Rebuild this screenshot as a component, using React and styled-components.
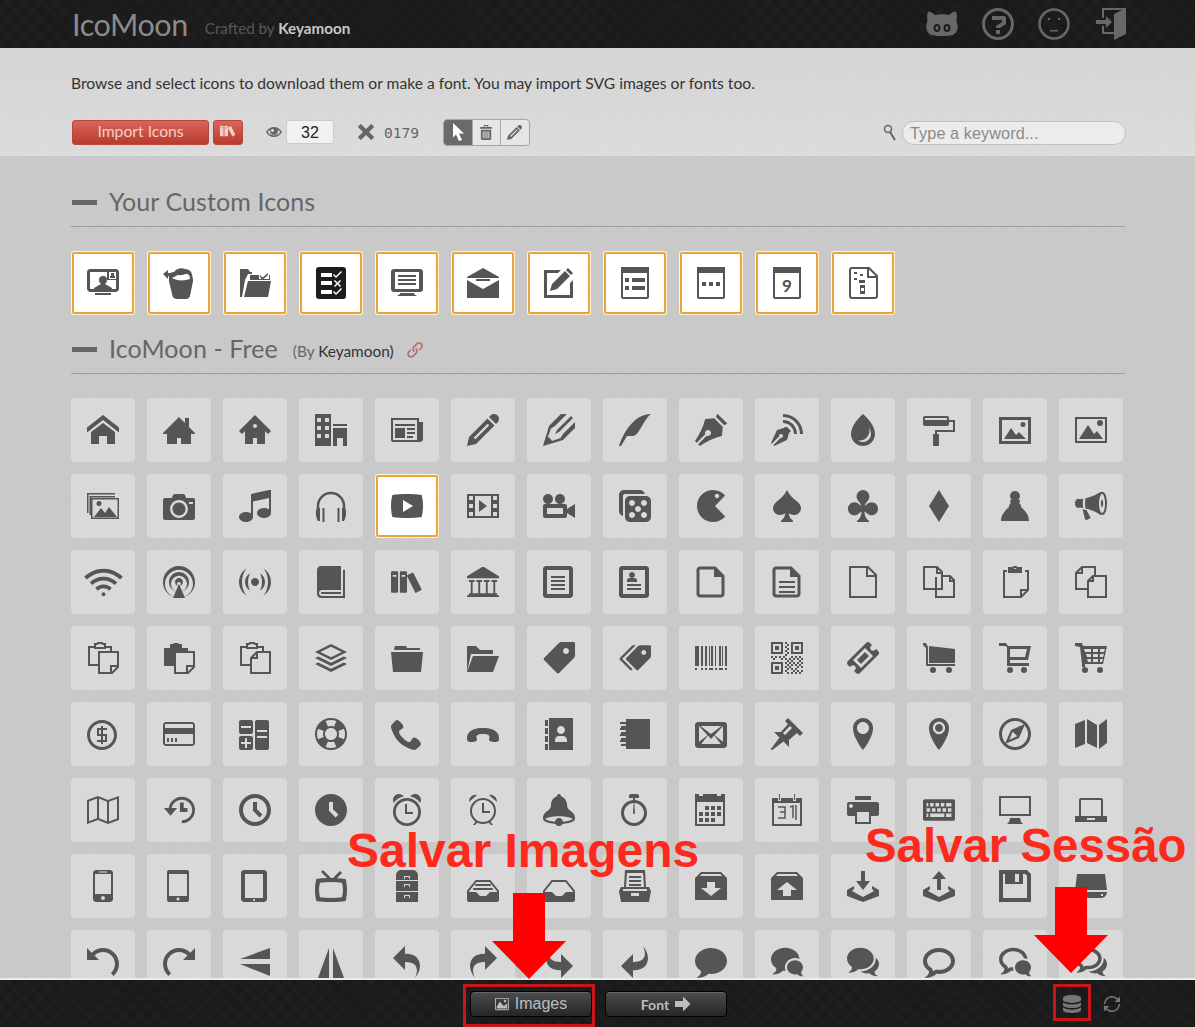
import React from 'react'
import styled, { createGlobalStyle } from 'styled-components'
import {
  ImHome, ImHome2, ImHome3, ImOffice, ImNewspaper, ImPencil, ImPencil2, ImQuill, ImPen, ImBlog, ImDroplet, ImPaintFormat,
  ImCamera, ImMusic, ImPlay, ImFilm, ImVideoCamera, ImDice, ImPacman, ImSpades, ImClubs, ImDiamonds, ImBullhorn,
  ImConnection, ImPodcast, ImFeed, ImBook, ImBooks, ImLibrary, ImFileText, ImProfile,
  ImStack, ImFolderOpen, ImPriceTag, ImPriceTags, ImBarcode, ImQrcode, ImTicket,
  ImCoinDollar, ImCreditCard, ImCalculator, ImLifebuoy, ImPhone, ImPhoneHangUp, ImAddressBook, ImEnvelop, ImPushpin, ImLocation, ImLocation2, ImCompass2, ImMap,
  ImMap2, ImHistory, ImClock, ImClock2, ImAlarm, ImBell, ImStopwatch, ImCalendar, ImPrinter, ImKeyboard, ImDisplay, ImLaptop,
  ImMobile, ImMobile2, ImTablet, ImTv, ImDrawer, ImDrawer2, ImBoxAdd, ImBoxRemove, ImFloppyDisk, ImDrive,
  ImUndo, ImRedo, ImUndo2, ImRedo2, ImForward, ImReply, ImBubble, ImBubbles, ImBubbles2, ImBubble2, ImBubbles3, ImBubbles4,
  ImQuestion, ImEnter, ImEye, ImCross, ImBin, ImLink, ImArrowRight, ImDatabase, ImLoop2, ImImage,
} from 'react-icons/im'

const GlobalStyle = createGlobalStyle`
  html, body { margin: 0; height: 100%; overflow: hidden; }
  body { font-family: "Lato", "Open Sans", sans-serif; background: #c9c9c9; }
`

const weave = `repeating-linear-gradient(45deg, rgba(255,255,255,.03) 0 1px, transparent 1px 2px), repeating-linear-gradient(-45deg, rgba(0,0,0,.2) 0 1px, transparent 1px 2px)`
const grain = `repeating-linear-gradient(45deg, rgba(255,255,255,.035) 0 1px, transparent 1px 3px), repeating-linear-gradient(-45deg, rgba(0,0,0,.012) 0 1px, transparent 1px 3px)`

const Page = styled.div`
  position: relative;
  height: 100vh;
  display: flex;
  flex-direction: column;
  overflow: hidden;
`
const Header = styled.header`
  flex: none;
  height: 48px;
  box-sizing: border-box;
  padding: 0 69px 0 72px;
  display: flex;
  align-items: center;
  background-color: #1b1b1b;
  background-image: ${weave};
`
const Logo = styled.div`
  font-size: 30.5px;
  color: #8b8b8b;
  line-height: 48px;
  letter-spacing: -.4px;
`
const Crafted = styled.div`
  margin: 8px 0 0 17px;
  font-size: 15.2px;
  color: #585858;
  b { color: #c8c8c8; font-weight: 700; }
`
const HeaderIcons = styled.nav`
  margin-left: auto;
  display: flex;
  align-items: center;
  gap: 24px;
  color: #686868;
`
const Toolbar = styled.section`
  flex: none;
  height: 108px;
  box-sizing: border-box;
  padding: 25px 69px 0 71px;
  background-color: #d9d9d9;
  background-image: ${grain}, linear-gradient(#d5d5d5, #dcdcdc);
`
const Description = styled.p`
  margin: 0;
  font-size: 15.64px;
  line-height: 20px;
  color: #333;
`
const Actions = styled.div`
  margin: 26px 0 0 1px;
  display: flex;
  align-items: center;
  height: 26px;
`
const RedButton = styled.button`
  width: ${p => p.$w}px;
  height: 25px;
  margin-right: ${p => p.$gap}px;
  padding: 0 0 2px;
  display: flex;
  align-items: center;
  justify-content: center;
  border: 1px solid #b9483c;
  border-radius: 3px;
  background: linear-gradient(#d9665a, #b93a2e);
  color: #f4cfc8;
  font: 15.7px "Lato", sans-serif;
`
const ZoomGroup = styled.div`
  margin-left: 23px;
  display: flex;
  align-items: center;
  gap: 4px;
  color: #666;
`
const SizeInput = styled.div`
  width: 48px;
  height: 24px;
  box-sizing: border-box;
  border: 1px solid #ccc;
  border-radius: 2px;
  background: #f1f1f1;
  color: #222;
  font: 16px/24px "Liberation Sans", sans-serif;
  text-align: center;
`
const Counter = styled.div`
  margin-left: 24px;
  display: flex;
  align-items: center;
  gap: 10px;
  color: #666;
  font: 14.6px "DejaVu Sans Mono", monospace;
`
const ToolGroup = styled.div`
  margin-left: 24px;
  display: flex;
  height: 25px;
  border: 1px solid #a5a5a5;
  border-radius: 4px;
  overflow: hidden;
  background: #e6e6e6;
`
const ToolCell = styled.div`
  width: 27.5px;
  display: flex;
  align-items: center;
  justify-content: center;
  color: ${p => (p.$active ? '#fff' : '#666')};
  background: ${p => (p.$active ? '#6a6a6a' : 'transparent')};
  & + & { border-left: 1px solid #aaa; }
`
const SearchBox = styled.div`
  margin: 1px 0 0 auto;
  display: flex;
  align-items: center;
  gap: 6px;
  color: #666;
`
const SearchField = styled.div`
  width: 224px;
  height: 24px;
  box-sizing: border-box;
  padding-left: 7px;
  border: 1px solid #c2c2c2;
  border-radius: 12px;
  background: #ececec;
  color: #8a8a8a;
  font: 16.2px/23px "Liberation Sans", sans-serif;
  letter-spacing: .1px;
`
const Content = styled.main`
  flex: 1;
  min-height: 0;
  overflow: hidden;
  padding: 0 70px 0 71px;
  background-color: #c9c9c9;
  background-image: ${grain};
`
const SectionHead = styled.div`
  margin-top: ${p => p.$top}px;
  display: flex;
  align-items: center;
  height: 26px;
  padding-bottom: 11px;
  border-bottom: 1px solid #9d9d9d;
`
const Dash = styled.span`
  width: 25px;
  height: 5px;
  margin: 0 12px 0 1px;
  background: #666;
`
const SectionTitle = styled.h2`
  margin: -2px 0 0;
  font-size: 25px;
  font-weight: 400;
  color: #666;
  letter-spacing: .1px;
`
const SectionBy = styled.span`
  margin: 4px 0 0 15px;
  font-size: 15.4px;
  color: #666;
  b { font-weight: 400; color: #333; }
`
const LinkMark = styled.span`
  margin: 1px 0 0 13px;
  display: flex;
  color: #b96a68;
`
const IconGrid = styled.div`
  margin-top: ${p => p.$top}px;
  display: grid;
  grid-template-columns: repeat(14, 64px);
  grid-auto-rows: 64px;
  gap: 12px;
`
const Tile = styled.div`
  display: flex;
  align-items: center;
  justify-content: center;
  box-sizing: border-box;
  color: #555;
  border-radius: ${p => (p.$selected ? 2 : 4)}px;
  background: ${p => (p.$selected ? '#fff' : '#d9d9d9')};
  ${p => p.$selected && `
    margin: 1px;
    border: 2px solid #e9a53c;
    box-shadow: 0 0 0 1px #fff3d8;
  `}
`
const Footer = styled.footer`
  flex: none;
  height: 49px;
  box-sizing: border-box;
  border-top: 2px solid #ececec;
  padding: 11px 75px 0 77px;
  display: grid;
  grid-template-columns: 1fr auto 1fr;
  background-color: #1b1b1b;
  background-image: ${weave};
`
const FooterButtons = styled.div`
  grid-column: 2;
  display: flex;
  gap: 13px;
`
const DarkButton = styled.button`
  width: 122px;
  height: 26px;
  padding: 0;
  display: flex;
  align-items: center;
  justify-content: center;
  gap: 6px;
  border: 1px solid #000;
  border-radius: 4px;
  background: linear-gradient(#4c4c4c, #262626);
  box-shadow: inset 0 1px 0 #666;
  color: #bdbdbd;
  font: ${p => p.$font};
`
const FooterTools = styled.div`
  justify-self: end;
  display: flex;
  align-items: center;
  height: 26px;
  gap: 23px;
  color: #777;
`
const RedNote = styled.div`
  position: absolute;
  left: ${p => p.$left}px;
  top: ${p => p.$top}px;
  font: bold ${p => p.$size}px/1 "Liberation Sans", sans-serif;
  color: #fb2a1c;
  white-space: nowrap;
`
const RedArrow = styled.svg`
  position: absolute;
  left: ${p => p.$left}px;
  top: ${p => p.$top}px;
  fill: #f00;
`
const RedFrame = styled.div`
  position: absolute;
  left: ${p => p.$left}px;
  top: 984px;
  width: ${p => p.$w}px;
  height: ${p => p.$h}px;
  box-sizing: border-box;
  border: 3px solid #c9161a;
`

const Svg = ({ children, size = 32 }) => (
  <svg width={size} height={size} viewBox="0 0 32 32" fill="currentColor">{children}</svg>
)
const Line = ({ children, w = 2 }) => (
  <g fill="none" stroke="currentColor" strokeWidth={w}>{children}</g>
)

const ImageThick = () => (
  <Svg>
    <path fillRule="evenodd" d="M0 3h32v27H0zM3 6v21h26V6z" />
    <path d="M5 25l7-11 5 7 3-3 7 7zM24 8a2.500 2.500 0 1 1 0 5 2.500 2.500 0 0 1 0-5z" />
  </Svg>
)
const ImageThin = () => (
  <Svg>
    <path fillRule="evenodd" d="M0 3h32v26H0zM2 5v22h28V5z" />
    <path d="M4 25l9-14 6 9 3-3 6 8zM25 6a3 3 0 1 1 0 6 3 3 0 0 1 0-6z" />
  </Svg>
)
const ImageStack = () => (
  <Svg>
    <path d="M0 3h28v1.500H1.500V23H0zM2.500 6H28v1.500H4V25H2.500z" />
    <path fillRule="evenodd" d="M4 8h28v21H4zM5.500 9.500v18h25v-18z" />
    <path d="M7 27l7-9 4 5 4-6 8 10zM12 11a2.500 2.500 0 1 1 0 5 2.500 2.500 0 0 1 0-5z" />
  </Svg>
)
const Headset = () => (
  <Svg>
    <Line w={2.500}><path d="M3 22v-6a13 13 0 0 1 26 0v6" /></Line>
    <path d="M2 18h3v13H3c-2-3-3-9-1-13zM30 18h-3v13h2c2-3 3-9 1-13zM7.500 18h2v14h-2zM22.500 18h2v14h-2z" />
  </Svg>
)
const Wifi = () => <ImConnection size={39} />
const FolderFlared = () => (
  <Svg>
    <path d="M4 4h11l1 2h13v2H3zM0 10h32l-2 20H2z" />
  </Svg>
)
const FileThick = ({ lines }) => (
  <Svg>
    <Line w={3}><path d="M5 2h15l8 8v18c0 1-1 2-2 2H5c-1 0-2-1-2-2V4c0-1 1-2 2-2z" /></Line>
    <path d="M19 1l10 10H19z" />
    {lines && <path d="M8 15h16v2H8zM8 20h16v2H8zM8 25h16v2H8z" />}
  </Svg>
)
const FileThin = () => (
  <Svg><Line><path d="M3 1h18l8 8v22H3zM20 1v9h9" /></Line></Svg>
)
const FilesPair = () => (
  <Svg>
    <Line>
      <path d="M1 1h13l5 5v17H1zM14 1v6h5" />
      <path d="M13 11v20h18V14l-4-4h-7M27 10v5h4" />
    </Line>
  </Svg>
)
const ClipPaper = () => (
  <Svg>
    <Line><path d="M8 5H5v26h17l7-7V5h-3M22 31v-7h7M10 6V2h4l1-1h2l1 1h4v4z" /></Line>
    <path d="M10 3h12v3H10z" />
  </Svg>
)
const FilesOverlap = () => (
  <Svg>
    <Line>
      <path d="M14 23H1V7l6-6h13v9M7 1v6H1" />
      <path d="M13 31V15l5-5h13v21zM18 10v5h-5" />
    </Line>
  </Svg>
)
const PasteFront = ({ solid, fold }) => (
  <Svg>
    {solid
      ? <path d="M1 6h6V2h3l1-1h4l1 1h3v4h6v5H13v13H1z" />
      : <Line><path d="M7 5H2v18h10M19 5h5v5M8 6V2h2l1-1h4l1 1h2v4z" /></Line>}
    {fold
      ? <Line><path d="M12 31V16l6-6h13v21zM18 10v6h-6" /></Line>
      : <Line><path d="M12 10h19v15l-6 6H12zM31 24h-7v7" /></Line>}
  </Svg>
)
const CartFilled = () => (
  <Svg>
    <path d="M0 1h3l2 4v17h27v2H5c-1 0-2 0-2-1V6L0 3z" />
    <path d="M6 4l26 3v14H6zM10 25a3 3 0 1 1 0 6 3 3 0 0 1 0-6zM26 25a3 3 0 1 1 0 6 3 3 0 0 1 0-6z" />
  </Svg>
)
const CartOutline = () => (
  <Svg>
    <path d="M0 1h7l2 3h23l-3 14H11v3h19v3H8V5L6 4H0zM11 7v8h15l2-8zM11 25a3 3 0 1 1 0 6 3 3 0 0 1 0-6zM25 25a3 3 0 1 1 0 6 3 3 0 0 1 0-6z" fillRule="evenodd" />
  </Svg>
)
const CartBasket = () => (
  <Svg>
    <path fillRule="evenodd" d="M0 1h7l1 3h24l-4 18H10v3h-3V22L5 5 0 4zM9 7l1 3h6V7zm9 0v3h5V7zm7 0v3h4l1-3zM11 12l1 3h4v-3zm7 0v3h5v-3zm7 0v3h3l1-3zM12 17l1 3h3v-3zm6 0v3h5v-3zm7 0v3h2l1-3z" />
    <path d="M10 25a3 3 0 1 1 0 6 3 3 0 0 1 0-6zM25 25a3 3 0 1 1 0 6 3 3 0 0 1 0-6z" />
  </Svg>
)
const Notebook = () => (
  <Svg>
    <path d="M7 1h24v30H7z" />
    <Line><path d="M1 5h5a2 2 0 0 1 0 4H2M1 11h5a2 2 0 0 1 0 4H2M1 17h5a2 2 0 0 1 0 4H2M1 23h5a2 2 0 0 1 0 4H2" /></Line>
  </Svg>
)
const AlarmOutline = () => (
  <Svg>
    <Line>
      <circle cx="16" cy="17" r="12" />
      <path d="M16 9v9h7" />
    </Line>
    <path d="M2 8c0-5 4-8 8-7zM30 8c0-5-4-8-8-7z" />
    <path d="M9 27l-3 4h2l3-3zM23 27l3 4h-2l-3-3z" />
  </Svg>
)
const Calendar31 = () => (
  <Svg>
    <path fillRule="evenodd" d="M1 4h6v3h3V4h12v3h3V4h6v28H1zM3 9v21h26V9z" />
    <path d="M8 0h1v6H8zM23 0h1v6h-1z" />
    <Line w="1.500">
      <path d="M7 13h7v5H9h5v6H7M19 13l3-1v12M25 11v15" />
    </Line>
  </Svg>
)
const Cabinet = () => (
  <Svg>
    <path fillRule="evenodd" d="M5 5c0-3 3-5 5-5h12c2 0 5 2 5 5v5H5zm8 1v3h1V7h4v2h1V6zM5 11h22v10H5zm8 3v3h1v-2h4v2h1v-3zM5 22h22v10H5zm8 3v3h1v-2h4v2h1v-3z" />
  </Svg>
)
const DrawerFile = () => (
  <Svg>
    <path fillRule="evenodd" d="M6 0h20l1 17h3l2 4-2 11H2L0 21l2-4h3zm2 3l-1 14h18L24 3zM4 19v2h24v-2zm8 4v3h8v-3z" />
    <path d="M10 6h12v2H10zM10 10h12v2H10zM10 14h12v2H10z" />
  </Svg>
)
const TrayArrow = ({ up }) => (
  <Svg>
    <path d="M0 20l7-4v3l-2 2 11 6 11-6-2-2v-3l7 4v6L16 32 0 26z" />
    <path d={up ? 'M16 1l7 8h-5v11h-4V9H9z' : 'M14 1h4v10h5l-7 9-7-9h5z'} />
  </Svg>
)
const FlipH = () => (
  <Svg><path d="M1 13L31 2v11zM1 18h30v12z" /></Svg>
)
const FlipV = () => (
  <Svg><path d="M14 2v30H3zM18 2l11 30H18z" /></Svg>
)
const Pawn = () => (
  <Svg>
    <path d="M16 1a5 5 0 0 1 3.500 8.500c1 .6 1.500 1 1.500 2s-.5 1.200-1 1.600c1.500 1 2 2.500 2 4C25 20 30 24 30 31H2c0-7 5-11 8-13.900 0-1.500.5-3 2-4-.5-.4-1-1-1-1.600s.5-1.400 1.500-2A5 5 0 0 1 16 1z" />
  </Svg>
)

const Cat = () => (
  <svg width="32" height="32" viewBox="0 0 32 32" fill="currentColor">
    <path fillRule="evenodd" d="M2 4c1-1 2-.5 7 3 4-1 10-1 14 0 5-3.500 6-4 7-3 1 1 1 6 .5 9 2 5 1.500 9-1 12-3 3-8 3-13.500 3s-10.500 0-13.500-3c-2.500-3-3-7-1-12C1 10 1 5 2 4zM11 16c-2 0-3.500 1.500-3.500 4S9 24 11 24s3.500-1.500 3.500-4-1.500-4-3.500-4zm10 0c-2 0-3.500 1.500-3.500 4s1.500 4 3.500 4 3.500-1.500 3.500-4-1.500-4-3.500-4z" />
    <ellipse cx="11" cy="20" rx="1.500" ry="2" />
    <ellipse cx="21" cy="20" rx="1.500" ry="2" />
  </svg>
)
const NeutralFace = () => (
  <Svg>
    <Line w={2.500}><circle cx="16" cy="16" r="14.500" /></Line>
    <path d="M10 10h2v2h-2zM20 10h2v2h-2zM12 22h8v1.500h-8z" />
  </Svg>
)
const Cursor = () => (
  <svg width="16" height="18" viewBox="0 0 16 18" fill="currentColor">
    <path d="M3 0l11 10.500H9l3 6.500-3 1-3-6.500-3 3z" />
  </svg>
)
const Lens = () => (
  <svg width="13" height="17" viewBox="0 0 13 17" fill="none" stroke="currentColor">
    <circle cx="5" cy="5" r="3.500" strokeWidth="1.500" />
    <path d="M7 8l5 8" strokeWidth="2" />
  </svg>
)

const CustomMonitor = () => (
  <Svg>
    <path fillRule="evenodd" d="M3 2h26c1 0 3 1 3 3v17c0 1-2 3-3 3H3c-1 0-3-2-3-3V5c0-2 2-3 3-3zm0 3v17h26V5z" />
    <path d="M16 9c3 0 4 2 4 4 0 2-1 3-2 4l7 4v4H7v-4l7-4c-1-1-2-2-2-4 0-2 1-4 4-4zM8 26h16v2H8zM20 4h10v9H20z" />
    <path fill="#fff" d="M22 5h7v7h-7z" />
    <path d="M24 6h3v3h-3zM23 9h5v2h-5z" />
  </Svg>
)
const CustomBucket = () => (
  <Svg>
    <path d="M6 14h24l-3 15c-.5 2-2 3-4 3h-9c-2 0-4-1-4.500-3z" />
    <path d="M6 9c0-3 3-4 5-4 2-3 7-5 11-3 3 0 7 2 7 6 1 3 1 5 1 7-7 2-17 2-24 0z" />
    <path fill="#fff" d="M9 11c3-1 4-3 7-3 2 1 5-1 7-1 3 0 4 2 4 5-6 2-13 2-18-1z" />
    <path d="M0 7l5-4v3h4v3H5v3z" />
  </Svg>
)
const CustomFolder = () => (
  <Svg>
    <path d="M1 2h8l2 3h2v2H9L6 13 3 30H1zM5 30l4-16h23l-3 16z" />
    <path d="M11 8h20v5H11z" />
    <path fill="#fff" d="M20 8h10v4H20z" />
    <path d="M21 8l2.500 2.500L29 6v2l-5.500 5L21 10z" />
  </Svg>
)
const CustomChecklist = () => (
  <Svg>
    <g fill="#1c1c1c"><path d="M4 0h24c2 0 3 1 3 3v26c0 2-1 3-3 3H4c-2 0-3-1-3-3V3c0-2 1-3 3-3z" /></g>
    <g fill="#fff">
      <path d="M6 6h11v4H6zM6 14h11v4H6zM6 23h11v4H6z" />
      <path d="M19 7l2 2 5-5 1 1-6 6-3-3zM19 14l1-1 2.500 2.500L25 13l1 1-2.500 2.500L26 19l-1 1-2.500-2.500L20 20l-1-1 2.500-2.500zM19 24l2 2 5-5 1 1-6 6-3-3z" />
    </g>
  </Svg>
)
const CustomScreen = () => (
  <Svg>
    <path fillRule="evenodd" d="M3 2h26c2 0 3 1 3 3v16c0 3-1 4-3 4H3c-2 0-3-1-3-4V5c0-2 1-3 3-3zm1 3v17h24V5z" />
    <path d="M7 8h18v2H7zM7 12h18v2H7zM7 16h18v2H7zM9 26h14v1l3 2H6l3-2z" />
  </Svg>
)
const CustomMail = () => (
  <Svg>
    <path d="M16 1l16 9v1H0v-1zM0 13l16 9 16-9v18H0z" />
    <path fill="#fff" d="M5 11h22v3l-11 6-11-6z" />
    <path d="M9 12h14v2H9z" />
  </Svg>
)
const CustomEdit = () => (
  <Svg>
    <path d="M1 3h17l-3 3H4v22h23V16l3-3v18H1z" />
    <path d="M25 1l5 5-2 2-5-5zM22 4l5 5-13 13-7 2 2-7z" />
  </Svg>
)
const CustomWindow = ({ children }) => (
  <Svg>
    <path fillRule="evenodd" d="M2 0h28v30c0 1-1 2-2 2H4c-1 0-2-1-2-2zm2 6v24h24V6z" />
    {children}
  </Svg>
)
const WindowNine = styled.text`
  font: 700 17px "Lato", sans-serif;
`
const CustomFace = () => (
  <Svg>
    <Line>
      <path d="M5 1h17l8 8v20c0 1-1 2-2 2H5c-1 0-2-1-2-2V3c0-1 1-2 2-2zM21 1v9h9" />
    </Line>
    <path d="M7 5h3v2H7zM13 7h3v2h-3zM7 11h3v2H7zM12 13h6v3h-6zM13 18h5v9h-5z" />
    <path fill="#fff" d="M14 21h3v3h-3z" />
  </Svg>
)

const customIcons = [
  CustomMonitor, CustomBucket, CustomFolder, CustomChecklist, CustomScreen, CustomMail, CustomEdit,
  () => <CustomWindow><path d="M6 11h4v4H6zM6 19h4v4H6zM13 11h13v4H13zM13 19h13v4H13z" /></CustomWindow>,
  () => <CustomWindow><path d="M7 15h4v4H7zM14 15h4v4h-4zM21 15h4v4h-4z" /></CustomWindow>,
  () => <CustomWindow><WindowNine x="16" y="25" textAnchor="middle" fill="currentColor">9</WindowNine></CustomWindow>,
  CustomFace,
]

const freeIcons = [
  ImHome, ImHome3, ImHome2, ImOffice, ImNewspaper, ImPencil, ImPencil2, ImQuill, ImPen, ImBlog, ImDroplet, ImPaintFormat, ImageThick, ImageThin,
  ImageStack, ImCamera, ImMusic, Headset, ImPlay, ImFilm, ImVideoCamera, ImDice, ImPacman, ImSpades, ImClubs, ImDiamonds, Pawn, ImBullhorn,
  Wifi, ImPodcast, ImFeed, ImBook, ImBooks, ImLibrary, ImFileText, ImProfile, () => <FileThick />, () => <FileThick lines />, FileThin, FilesPair, ClipPaper, FilesOverlap,
  () => <PasteFront />, () => <PasteFront solid />, () => <PasteFront fold />, ImStack, FolderFlared, ImFolderOpen, ImPriceTag, ImPriceTags, ImBarcode, ImQrcode, ImTicket, CartFilled, CartOutline, CartBasket,
  ImCoinDollar, ImCreditCard, ImCalculator, ImLifebuoy, ImPhone, ImPhoneHangUp, ImAddressBook, Notebook, ImEnvelop, ImPushpin, ImLocation, ImLocation2, ImCompass2, ImMap,
  ImMap2, ImHistory, ImClock, ImClock2, ImAlarm, AlarmOutline, ImBell, ImStopwatch, ImCalendar, Calendar31, ImPrinter, ImKeyboard, ImDisplay, ImLaptop,
  ImMobile, ImMobile2, ImTablet, ImTv, Cabinet, ImDrawer, ImDrawer2, DrawerFile, ImBoxAdd, ImBoxRemove, () => <TrayArrow />, () => <TrayArrow up />, ImFloppyDisk, ImDrive,
  ImUndo, ImRedo, FlipH, FlipV, ImUndo2, ImRedo2, ImForward, ImReply, ImBubble, ImBubbles, ImBubbles2, ImBubble2, ImBubbles3, ImBubbles4,
]

const SELECTED_FREE = 18

const Arrow = ({ left, top, w, h, shaft, neck }) => {
  const mid = w / 2
  return (
    <RedArrow $left={left} $top={top} width={w} height={h} viewBox={`0 0 ${w} ${h}`}>
      <polygon points={`${mid - shaft / 2},0 ${mid + shaft / 2},0 ${mid + shaft / 2},${neck} ${w},${neck} ${mid},${h} 0,${neck} ${mid - shaft / 2},${neck}`} />
    </RedArrow>
  )
}

const App = () => (
  <Page>
    <GlobalStyle />
    <Header>
      <Logo>IcoMoon</Logo>
      <Crafted>Crafted by <b>Keyamoon</b></Crafted>
      <HeaderIcons>
        <Cat />
        <ImQuestion size={32} />
        <NeutralFace />
        <ImEnter size={32} />
      </HeaderIcons>
    </Header>

    <Toolbar>
      <Description>Browse and select icons to download them or make a font. You may import SVG images or fonts too.</Description>
      <Actions>
        <RedButton $w={137} $gap={4}>Import Icons</RedButton>
        <RedButton $w={30} $gap={0}><ImBooks size={16} /></RedButton>
        <ZoomGroup>
          <ImEye size={16} />
          <SizeInput>32</SizeInput>
        </ZoomGroup>
        <Counter>
          <ImCross size={16} />
          0179
        </Counter>
        <ToolGroup>
          <ToolCell $active><Cursor /></ToolCell>
          <ToolCell><ImBin size={15} /></ToolCell>
          <ToolCell><ImPencil size={15} /></ToolCell>
        </ToolGroup>
        <SearchBox>
          <Lens />
          <SearchField>Type a keyword...</SearchField>
        </SearchBox>
      </Actions>
    </Toolbar>

    <Content>
      <SectionHead $top={33}>
        <Dash />
        <SectionTitle>Your Custom Icons</SectionTitle>
      </SectionHead>
      <IconGrid $top={24}>
        {customIcons.map((Icon, i) => <Tile key={i} $selected><Icon /></Tile>)}
      </IconGrid>
      <SectionHead $top={21}>
        <Dash />
        <SectionTitle>IcoMoon - Free</SectionTitle>
        <SectionBy>(By <b>Keyamoon)</b></SectionBy>
        <LinkMark><ImLink size={16} /></LinkMark>
      </SectionHead>
      <IconGrid $top={24}>
        {freeIcons.map((Icon, i) => (
          <Tile key={i} $selected={i === SELECTED_FREE}><Icon size={32} /></Tile>
        ))}
      </IconGrid>
    </Content>

    <Footer>
      <FooterButtons>
        <DarkButton $font={'16px "Liberation Sans", sans-serif'}><ImImage size={14} /> Images</DarkButton>
        <DarkButton $font={'bold 14px "Lato", sans-serif'}>Font <ImArrowRight size={16} /></DarkButton>
      </FooterButtons>
      <FooterTools>
        <ImDatabase size={18} />
        <ImLoop2 size={16} />
      </FooterTools>
    </Footer>

    <RedNote $left={347} $top={827} $size={48}>Salvar Imagens</RedNote>
    <RedNote $left={865} $top={822} $size={47.4}>Salvar Sessão</RedNote>
    <Arrow left={492} top={893} w={74} h={86} shaft={32} neck={48} />
    <Arrow left={1034} top={887} w={74} h={86} shaft={32} neck={48} />
    <RedFrame $left={463} $w={132} $h={43} />
    <RedFrame $left={1053} $w={38} $h={37} />
  </Page>
)

export default App
